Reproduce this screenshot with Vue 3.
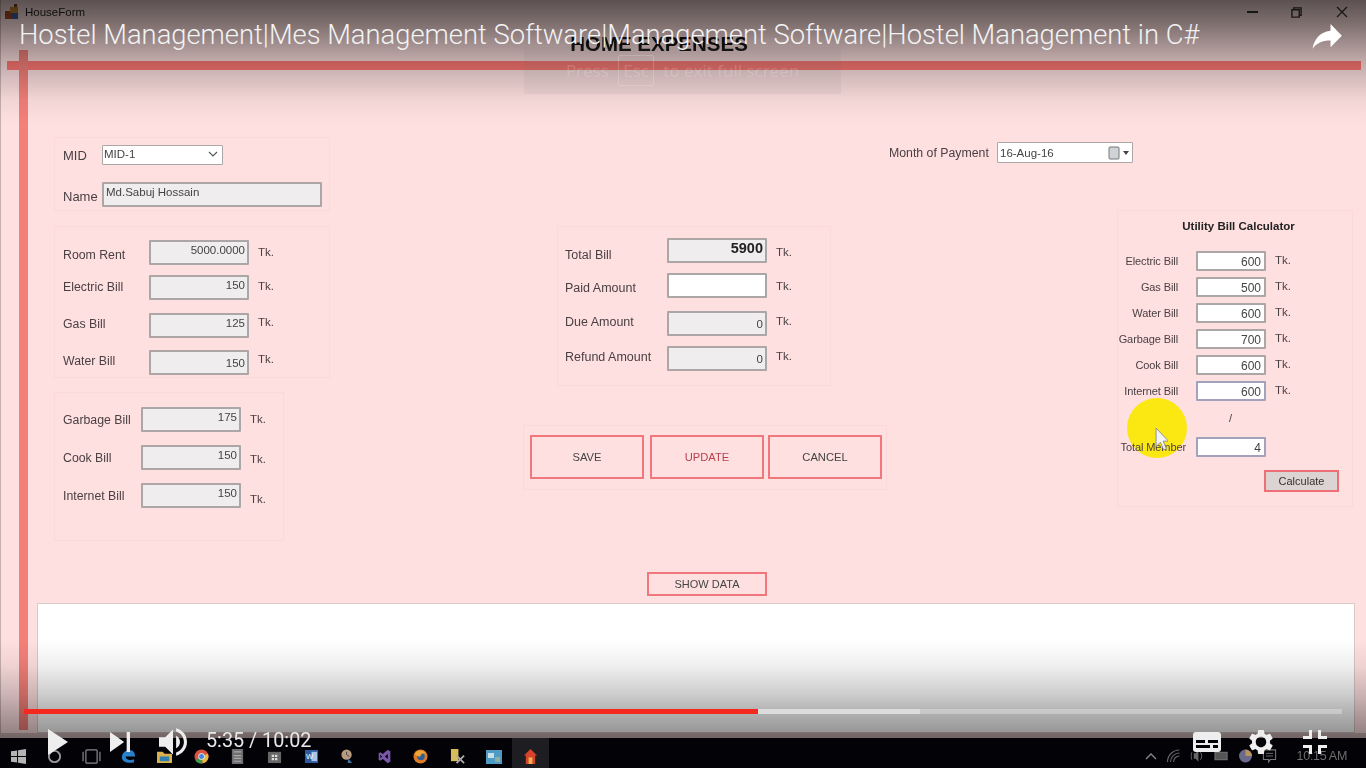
<template>
  <div class="screen">
    <div class="window">
      <header class="titlebar">
        <svg class="app-icon" viewBox="0 0 14 16">
          <rect x="0" y="7" width="6" height="8" fill="#a8482c" />
          <rect x="5" y="3" width="8" height="6" fill="#c98a2c" />
          <rect x="6" y="9" width="7" height="6" fill="#3c5f9c" />
          <rect x="9" y="0" width="3" height="3" fill="#7c3a30" />
        </svg>
        <span class="app-name">HouseForm</span>
        <div class="win-buttons">
          <span class="win-min"></span>
          <svg class="win-max" viewBox="0 0 12 12"><path d="M1 3h8v8H1zM3 3V1h8v8H9" fill="none" stroke="#333" stroke-width="1.500" /></svg>
          <svg class="win-close" viewBox="0 0 12 12"><path d="M1 1l10 10M11 1L1 11" stroke="#333" stroke-width="1.300" /></svg>
        </div>
      </header>
      <h1 class="heading">HOME EXPENSES</h1>
      <div class="red-bar"></div>

      <div class="body">
        <div class="col-left">
          <section class="panel p-member">
            <div class="row">
              <label class="lbl-short">MID</label>
              <div class="field white combo">
                <span>MID-1</span>
                <svg viewBox="0 0 10 6" class="chev"><path d="M1 1l4 4 4-4" fill="none" stroke="#555" stroke-width="1.100" /></svg>
              </div>
            </div>
            <div class="row">
              <label class="lbl-short lbl-name">Name</label>
              <div class="field name-field">Md.Sabuj Hossain</div>
            </div>
          </section>

          <section class="panel p-rent">
            <div v-for="b in rentBills" :key="b.label" class="row">
              <label class="lbl-bill">{{ b.label }}</label>
              <div class="field num">{{ b.value }}</div>
              <span class="tk">Tk.</span>
            </div>
          </section>

          <section class="panel p-other">
            <div v-for="b in otherBills" :key="b.label" class="row">
              <label class="lbl-other">{{ b.label }}</label>
              <div class="field num">{{ b.value }}</div>
              <span class="tk">Tk.</span>
            </div>
          </section>
        </div>

        <div class="col-center">
          <section class="panel p-total">
            <div v-for="t in totals" :key="t.label" class="row">
              <label class="lbl-total">{{ t.label }}</label>
              <div class="field num" :class="{ white: t.editable, strong: t.strong }">{{ t.value }}</div>
              <span class="tk">Tk.</span>
            </div>
          </section>
          <section class="panel p-actions">
            <button class="big-btn">SAVE</button>
            <button class="big-btn update">UPDATE</button>
            <button class="big-btn cancel">CANCEL</button>
          </section>
          <button class="show-btn">SHOW DATA</button>
        </div>

        <div class="col-right">
          <div class="month">
            <label>Month of Payment</label>
            <div class="field white date">
              <span>16-Aug-16</span>
              <svg viewBox="0 0 22 14" class="cal">
                <rect x="1" y="1" width="10" height="12" rx="1" fill="#cfd3d8" stroke="#777" />
                <path d="M15 5h6l-3 4z" fill="#444" />
              </svg>
            </div>
          </div>
          <section class="panel p-utility">
            <h3>Utility Bill Calculator</h3>
            <div v-for="u in utility" :key="u.label" class="u-row">
              <label>{{ u.label }}</label>
              <div class="field white num u-field">{{ u.value }}</div>
              <span class="tk">Tk.</span>
            </div>
            <div class="slash">/</div>
            <div class="u-row u-member">
              <label>Total Member</label>
              <div class="field white num u-field focus">4</div>
            </div>
            <button class="calc-btn">Calculate</button>
          </section>
        </div>
      </div>

      <div class="grid-view"></div>

      <div class="side-bar"></div>
      <div class="highlight"></div>
      <svg class="cursor" viewBox="0 0 12 22">
        <path d="M1 1v17l4-4 3 7 2.500-1-3-7h5z" fill="#f4f4f4" stroke="#888" stroke-width=".8" />
      </svg>
    </div>

    <footer class="taskbar">
      <div class="task"><svg viewBox="0 0 16 16" class="t-icon"><path d="M0 2.500l6.500-1v6H0zM7.500 1.300L16 0v7.500H7.500zM0 8.500h6.500v6l-6.500-1zM7.500 8.500H16V16l-8.500-1.300z" fill="#b4b4b4" /></svg></div>
      <div class="task"><svg viewBox="0 0 16 16" class="t-icon"><circle cx="8" cy="8" r="6" fill="none" stroke="#999" stroke-width="2" /></svg></div>
      <div class="task"><svg viewBox="0 0 22 16" class="t-wide"><rect x="5" y="1" width="12" height="14" rx="1" fill="none" stroke="#888" stroke-width="1.300" /><path d="M2 3v10M20 3v10" stroke="#888" stroke-width="1.300" /></svg></div>
      <div class="task"><svg viewBox="0 0 16 16" class="t-icon"><path d="M1 9c0-5 4-8 8-8 4 0 6 3 6 7H5c0 3 4 5 9 3v3c-6 2-13 0-13-5z" fill="#2a7fc9" /></svg></div>
      <div class="task"><svg viewBox="0 0 16 16" class="t-icon"><path d="M0 3h6l2 2h8v10H0z" fill="#d8b24a" /><rect x="3" y="8" width="10" height="5" fill="#2f7fb5" /></svg></div>
      <div class="task"><svg viewBox="0 0 16 16" class="t-icon"><circle cx="8" cy="8" r="7.500" fill="#d9513f" /><path d="M8 8L1.500 12a7.500 7.500 0 0 0 8 3.300z" fill="#3d9a4f" /><path d="M8 8l6.800-3a7.500 7.500 0 0 1-5.300 10.300z" fill="#e6bd3a" /><circle cx="8" cy="8" r="3.200" fill="#4a86d8" stroke="#eee" /></svg></div>
      <div class="task"><svg viewBox="0 0 14 16" class="t-icon"><rect x="1" y="0" width="12" height="16" fill="#6e6e6e" /><path d="M3 3h8M3 7h8M3 10h8M3 13h8" stroke="#aaa" stroke-width="1.200" /></svg></div>
      <div class="task"><svg viewBox="0 0 16 16" class="t-icon"><rect x="1" y="3" width="14" height="12" fill="#666" /><path d="M5 6h2.500v2.500H5zM8.500 6H11v2.500H8.500zM5 9.500h2.500V12H5zM8.500 9.500H11V12H8.500z" fill="#ddd" /></svg></div>
      <div class="task"><svg viewBox="0 0 16 16" class="t-icon"><rect x="1" y="1" width="14" height="14" fill="#2c5a9e" /><rect x="8" y="3" width="6" height="10" fill="#a8c4e6" /><text x="2" y="11" font-size="8" fill="#fff" font-family="Liberation Sans, sans-serif">W</text></svg></div>
      <div class="task"><svg viewBox="0 0 16 16" class="t-icon"><circle cx="7" cy="6" r="5.500" fill="#b89a80" /><path d="M7 3v3l3 2" stroke="#444" fill="none" /><path d="M9 10l4 5h-5z" fill="#3a6fa8" /></svg></div>
      <div class="task"><svg viewBox="0 0 16 18" class="t-icon"><path d="M12 1l3 2v12l-3 2-6-5-3 2-2-1V5l2-1 3 2zM12 6L8.500 9 12 12zM3 7v4l2-2z" fill="#7a58a8" /></svg></div>
      <div class="task"><svg viewBox="0 0 16 16" class="t-icon"><circle cx="8" cy="8" r="7.500" fill="#e07b24" /><circle cx="8.500" cy="8" r="4" fill="#2d5f9e" /><path d="M2 5c3-5 9-4 12 0-3-1-6 0-6 3-3 0-5-1-6-3z" fill="#f0a636" /></svg></div>
      <div class="task"><svg viewBox="0 0 16 16" class="t-icon"><rect x="1" y="0" width="8" height="13" fill="#d6bb5c" /><path d="M7 7l8 8M15 7l-8 8" stroke="#aaa" stroke-width="2" /></svg></div>
      <div class="task"><svg viewBox="0 0 16 14" class="t-wide2"><rect width="16" height="14" fill="#4f9ac4" /><rect x="2" y="3" width="6" height="5" fill="#c8dfe8" /><rect x="9" y="7" width="5" height="5" fill="#8fb0a0" /></svg></div>
      <div class="task active"><svg viewBox="0 0 14 16" class="t-icon"><path d="M7 0l7 7h-2v9H2V7H0z" fill="#d6432c" /><rect x="5" y="9" width="4" height="7" fill="#f0b24a" /></svg></div>

      <div class="tray">
        <svg viewBox="0 0 12 8" class="tray-caret"><path d="M1 7l5-5 5 5" fill="none" stroke="#8a8a8a" stroke-width="1.300" /></svg>
        <svg viewBox="0 0 14 14" class="tray-i"><path d="M1 13a12 12 0 0 1 12-12M4 13a9 9 0 0 1 9-9M7 13a6 6 0 0 1 6-6" fill="none" stroke="#666" stroke-width="1.200" /></svg>
        <svg viewBox="0 0 16 14" class="tray-i"><path d="M6 4l3-3v12l-3-3H4V4z" fill="#666" /><path d="M11 3c2 2 2 6 0 8M2 3c-1 2-1 6 0 8" fill="none" stroke="#666" /></svg>
        <svg viewBox="0 0 16 12" class="tray-i"><rect x="1" y="2" width="13" height="8" fill="#555" stroke="#777" /></svg>
        <svg viewBox="0 0 14 14" class="tray-i"><circle cx="7" cy="7" r="6.500" fill="#6a6a8a" /><path d="M7 .5a6.500 6.500 0 0 1 6.500 6.500H7z" fill="#b8945a" /></svg>
        <svg viewBox="0 0 16 16" class="tray-i"><path d="M1 1h14v11H9l-2 3v-3H1z" fill="none" stroke="#777" stroke-width="1.200" /><path d="M4 5h8M4 8h8" stroke="#777" /></svg>
        <span class="clock">10:15 AM</span>
      </div>
    </footer>

    <!-- youtube player chrome over the recording -->
    <div class="shade-top"></div>
    <div class="shade-bottom"></div>
    <div class="esc-toast">Press <span class="esc-key">Esc</span> to exit full screen</div>
    <div class="yt-title">{{ videoTitle }}</div>
    <svg class="yt-share" viewBox="6 9 23 19"><path d="M20.200 14.100V9l8.700 8.900-8.700 8.800v-5.200c-6.300 0-10.700 2-13.800 6.300 1.200-6.300 4.900-12.700 13.800-13.700z" fill="#fff" /></svg>
    <div class="yt-controls">
      <div class="progress">
        <div class="played" :style="{ width: playedPct + '%' }"></div>
        <div class="buffered" :style="{ width: bufferedPct + '%' }"></div>
      </div>
      <div class="yt-row">
        <svg class="yt-play" viewBox="0 0 20 26"><path d="M0 0l20 13L0 26z" fill="#eee" /></svg>
        <svg class="yt-next" viewBox="12 12 12 12"><path d="M12 24l8.500-6L12 12zM22 12v12h2V12z" fill="#eee" /></svg>
        <svg class="yt-vol" viewBox="8 9 18 18"><path fill="#eee" d="M8 21h4l5 5V10l-5 5H8zM19 14v8c1.480-.68 2.500-2.230 2.500-4 0-1.740-1.020-3.260-2.500-4zM19 11.290c2.890.85 5 3.540 5 6.710s-2.110 5.860-5 6.710v2.060c4.010-.91 7-4.490 7-8.770s-2.990-7.860-7-8.770z" /></svg>
        <span class="yt-time">5:35 / 10:02</span>
        <div class="yt-right">
          <svg class="yt-cc" viewBox="0 0 28 20"><path fill-rule="evenodd" fill="#eee" d="M3 0h22a3 3 0 0 1 3 3v14a3 3 0 0 1-3 3H3a3 3 0 0 1-3-3V3a3 3 0 0 1 3-3zM3 8v3h9V8zM15 8v3h10V8zM3 13v3h14v-3zM20 13v3h5v-3z" /></svg>
          <svg class="yt-gear" viewBox="10 10 16 16"><path fill-rule="evenodd" fill="#eee" d="m23.940 18.780c.03-.25.05-.51.05-.78s-.02-.52-.05-.78l1.680-1.320c.15-.12.19-.33.09-.51l-1.600-2.760c-.09-.17-.31-.24-.48-.17l-1.990.8c-.41-.32-.86-.58-1.350-.78l-.30-2.120c-.02-.19-.19-.33-.39-.33h-3.200c-.2 0-.36.14-.39.33l-.30 2.120c-.48.2-.93.47-1.350.78l-1.990-.8c-.18-.07-.39 0-.48.17l-1.600 2.760c-.10.17-.05.39.09.51l1.680 1.320c-.03.25-.05.52-.05.78s.02.52.05.78l-1.680 1.320c-.15.12-.19.33-.09.51l1.600 2.760c.09.17.31.24.48.17l1.990-.8c.41.32.86.58 1.350.78l.30 2.120c.02.19.19.33.39.33h3.200c.2 0 .36-.14.39-.33l.30-2.120c.48-.2.93-.47 1.350-.78l1.990.8c.18.07.39 0 .48-.17l1.600-2.760c.09-.17.05-.39-.09-.51zM18 21.500c-1.930 0-3.500-1.570-3.500-3.500s1.570-3.500 3.500-3.500 3.500 1.570 3.500 3.500-1.570 3.500-3.500 3.500z" /></svg>
          <svg class="yt-exit" viewBox="10 10 16 16"><path fill="#eee" d="M14 14h-4v2h6v-6h-2zM22 14v-4h-2v6h6v-2zM20 26h2v-4h4v-2h-6zM10 22h4v4h2v-6h-6z" /></svg>
        </div>
      </div>
    </div>
  </div>
</template>

<script setup>
const videoTitle =
  'Hostel Management|Mes Management Software|Management Software|Hostel Management in C#';

const rentBills = [
  { label: 'Room Rent', value: '5000.0000' },
  { label: 'Electric Bill', value: '150' },
  { label: 'Gas Bill', value: '125' },
  { label: 'Water Bill', value: '150' },
];

const otherBills = [
  { label: 'Garbage Bill', value: '175' },
  { label: 'Cook Bill', value: '150' },
  { label: 'Internet Bill', value: '150' },
];

const totals = [
  { label: 'Total Bill', value: '5900', strong: true },
  { label: 'Paid Amount', value: '', editable: true },
  { label: 'Due Amount', value: '0' },
  { label: 'Refund Amount', value: '0' },
];

const utility = [
  { label: 'Electric Bill', value: '600' },
  { label: 'Gas Bill', value: '500' },
  { label: 'Water Bill', value: '600' },
  { label: 'Garbage Bill', value: '700' },
  { label: 'Cook Bill', value: '600' },
  { label: 'Internet Bill', value: '600' },
];

// 5:35 of 10:02, measured along the bar
const playedPct = 55.7;
const bufferedPct = 68;
</script>

<style>
html,
body {
  margin: 0;
  background: #000;
}
</style>

<style scoped>
.screen {
  position: relative;
  width: 1366px;
  height: 768px;
  overflow: hidden;
  background: #020207;
  font-family: 'Liberation Sans', Arial, sans-serif;
}

/* recorded windows form */
.window {
  position: relative;
  height: 738px;
  box-sizing: border-box;
  background: #ffe0e0;
  border-left: 1px solid #c8b0b0;
  border-bottom: 5px solid #cdb4b6;
  filter: blur(0.6px);
  display: flex;
  flex-direction: column;
  color: #4a4044;
  font-size: 12px;
}
.titlebar {
  height: 24px;
  flex: none;
  display: flex;
  align-items: center;
  padding-left: 4px;
}
.app-icon {
  width: 14px;
  height: 16px;
}
.app-name {
  margin-left: 6px;
  font-size: 11.500px;
  color: #222;
}
.win-buttons {
  margin-left: auto;
  display: flex;
  align-items: center;
  margin-right: 18px;
}
.win-min {
  width: 11px;
  height: 1.500px;
  background: #333;
}
.win-max {
  width: 11px;
  height: 11px;
  margin-left: 33px;
}
.win-close {
  width: 12px;
  height: 12px;
  margin-left: 34px;
}
.heading {
  margin: 0;
  height: 37px;
  flex: none;
  box-sizing: border-box;
  padding-top: 10px;
  text-align: center;
  font-size: 20.500px;
  line-height: 20px;
  font-weight: bold;
  color: #111;
  width: 1316px;
}
.red-bar {
  height: 9px;
  flex: none;
  margin: 0 5px 0 6px;
  background: #ff7873;
}
.side-bar {
  position: absolute;
  left: 18px;
  top: 50px;
  width: 9px;
  height: 680px;
  background: #f5807a;
}

.body {
  position: relative;
  z-index: 1;
  flex: none;
  height: 459px;
  margin-top: 67px;
  display: flex;
  align-items: flex-start;
}
.panel {
  box-sizing: border-box;
  border: 1px solid #fbd9d9;
}
.row {
  display: flex;
  align-items: center;
}
.field {
  box-sizing: border-box;
  height: 25px;
  flex: none;
  background: #efeded;
  border: 2px solid #aca6a6;
  border-radius: 1px;
  font-size: 11.500px;
  line-height: 14px;
  padding: 1px 2px;
  color: #444;
}
.field.white {
  background: #fff;
}
.num {
  width: 100px;
  text-align: right;
}
.strong {
  font-size: 14.500px;
  font-weight: bold;
  color: #222;
}
.tk {
  margin-left: 9px;
  margin-top: -2px;
  font-size: 11.500px;
}

.col-left {
  flex: none;
  width: 276px;
  margin-left: 53px;
}
.p-member {
  height: 74px;
  padding: 7px 0 0 8px;
}
.p-member .row + .row {
  margin-top: 17px;
}
.lbl-short {
  width: 39px;
  font-size: 13px;
}
.lbl-name {
  margin-top: 4px;
}
.combo {
  width: 121px;
  height: 20px;
  display: flex;
  justify-content: space-between;
  align-items: center;
  padding: 0 2px 2px 1px;
  border-width: 1.500px;
}
.chev {
  width: 10px;
  height: 6px;
  margin-right: 2px;
}
.name-field {
  width: 220px;
  padding-left: 2px;
}
.p-rent {
  margin-top: 15px;
  height: 152px;
  padding: 13px 0 0 8px;
}
.p-rent .row:nth-child(2) {
  margin-top: 10px;
}
.p-rent .row:nth-child(3) {
  margin-top: 13px;
}
.p-rent .row:nth-child(4) {
  margin-top: 12px;
}
.lbl-bill {
  width: 86px;
  font-size: 12.300px;
}
.p-rent .row:nth-child(1) .lbl-bill {
  margin-top: 4px;
}
.p-rent .row:nth-child(2) .lbl-bill {
  margin-top: -2px;
}
.p-rent .row:nth-child(3) .lbl-bill,
.p-rent .row:nth-child(4) .lbl-bill {
  margin-top: -4px;
}
.p-rent .row:nth-child(2) .tk {
  margin-top: -4px;
}
.p-rent .row:nth-child(3) .tk,
.p-rent .row:nth-child(4) .tk {
  margin-top: -8px;
}
.p-rent .row:nth-child(4) .field {
  padding-top: 4px;
}
.p-other {
  margin-top: 14px;
  width: 230px;
  height: 149px;
  padding: 14px 0 0 8px;
}
.p-other .row + .row {
  margin-top: 13px;
}
.p-other .row:nth-child(2) .tk {
  margin-top: 2px;
}
.p-other .row:nth-child(3) .tk {
  margin-top: 6px;
}
.lbl-other {
  width: 78px;
  font-size: 12.300px;
}

.col-center {
  flex: none;
  width: 364px;
  margin-left: 193px;
  padding-top: 89px;
}
.p-total {
  width: 274px;
  height: 160px;
  margin-left: 34px;
  padding: 11px 0 0 7px;
}
.p-total .row:nth-child(2) {
  margin-top: 10px;
}
.p-total .row:nth-child(3) {
  margin-top: 13px;
}
.p-total .row:nth-child(4) {
  margin-top: 10px;
}
.lbl-total {
  width: 102px;
  font-size: 12.500px;
}
.p-total .row:nth-child(1) .lbl-total {
  margin-top: 8px;
}
.p-total .row:nth-child(2) .lbl-total {
  margin-top: 4px;
}
.p-total .row:nth-child(3) .lbl-total,
.p-total .row:nth-child(4) .lbl-total {
  margin-top: -4px;
}
.p-total .row:nth-child(1) .tk {
  margin-top: 2px;
}
.p-total .row:nth-child(2) .tk {
  margin-top: 0;
}
.p-total .row:nth-child(3) .tk,
.p-total .row:nth-child(4) .tk {
  margin-top: -6px;
}
.p-total .row:nth-child(3) .field,
.p-total .row:nth-child(4) .field {
  padding-top: 4px;
}
.p-actions {
  margin-top: 39px;
  height: 65px;
  padding: 9px 0 0 6px;
  display: flex;
}
.big-btn {
  width: 114px;
  height: 44px;
  box-sizing: border-box;
  background: transparent;
  border: 2px solid #f0787c;
  font-family: inherit;
  font-size: 11.200px;
  color: #444;
  padding: 0;
}
.update {
  margin-left: 6px;
  color: #b8404c;
}
.cancel {
  margin-left: 4px;
}
.show-btn {
  display: block;
  margin: 82px 0 0 124px;
  width: 120px;
  height: 24px;
  box-sizing: border-box;
  background: transparent;
  border: 2px solid #f0787c;
  font-family: inherit;
  font-size: 11px;
  color: #444;
  padding: 0;
}

.col-right {
  flex: none;
  width: 464px;
  margin-left: 2px;
  padding-top: 5px;
}
.month {
  display: flex;
  align-items: center;
  font-size: 12.300px;
}
.month label {
  width: 108px;
}
.date {
  width: 136px;
  height: 21px;
  display: flex;
  justify-content: space-between;
  align-items: center;
  border-width: 1.500px;
  padding: 0 2px;
  font-size: 11.500px;
}
.cal {
  width: 22px;
  height: 14px;
}
.p-utility {
  margin: 47px 0 0 auto;
  width: 236px;
  height: 297px;
  padding-top: 7px;
}
.p-utility h3 {
  margin: 0 0 17px;
  height: 16px;
  text-align: center;
  font-size: 11.500px;
  line-height: 16px;
  font-weight: bold;
  color: #222;
  padding-left: 7px;
}
.u-row {
  display: flex;
  align-items: center;
  height: 20px;
  margin-bottom: 6px;
}
.u-row label {
  width: 60px;
  text-align: right;
  margin-right: 18px;
  font-size: 11px;
  white-space: nowrap;
  letter-spacing: -0.1px;
}
.u-field {
  width: 70px;
  height: 20px;
  font-size: 12px;
  padding: 2px 3px;
}
.u-row:nth-of-type(n + 6) .u-field {
  border-color: #a2a2bc;
}
.slash {
  height: 30px;
  line-height: 22px;
  padding-left: 111px;
  font-size: 11px;
}
.u-member label {
  width: 68px;
  margin-right: 10px;
}
.focus {
  border-color: #8f90c4;
}
.calc-btn {
  display: block;
  width: 75px;
  height: 22px;
  margin: 13px 13px 0 auto;
  box-sizing: border-box;
  background: #dcd3d3;
  border: 2px solid #ee7076;
  font-family: inherit;
  font-size: 11px;
  color: #333;
  padding: 0;
}
.grid-view {
  flex: 1;
  margin: 7px 11px 0 36px;
  background: #fff;
  border: 1px solid #d8c8c8;
}
.highlight {
  position: absolute;
  z-index: 0;
  left: 1126px;
  top: 398px;
  width: 60px;
  height: 60px;
  border-radius: 50%;
  background: #fbe712;
}
.cursor {
  position: absolute;
  z-index: 2;
  left: 1154px;
  top: 427px;
  width: 13px;
  height: 24px;
}

/* windows taskbar */
.taskbar {
  height: 30px;
  display: flex;
  align-items: center;
  filter: blur(0.5px);
}
.task {
  width: 36.600px;
  height: 30px;
  flex: none;
  display: flex;
  align-items: center;
  justify-content: center;
  padding-top: 7px;
  box-sizing: border-box;
}
.active {
  background: #1e1e22;
}
.t-icon {
  width: 15px;
  height: 15px;
}
.t-wide {
  width: 21px;
  height: 15px;
}
.t-wide2 {
  width: 16px;
  height: 14px;
}
.tray {
  margin-left: auto;
  display: flex;
  align-items: center;
  padding: 6px 19px 0 0;
}
.tray-caret {
  width: 12px;
  height: 8px;
}
.tray-i {
  width: 15px;
  height: 14px;
  margin-left: 9px;
}
.clock {
  margin-left: 20px;
  font-size: 12.500px;
  color: #6e6e6e;
  letter-spacing: -0.3px;
}

/* youtube chrome */
.shade-top {
  position: absolute;
  left: 0;
  right: 0;
  top: 0;
  height: 125px;
  background: linear-gradient(
    rgba(0, 0, 0, 0.64) 0,
    rgba(0, 0, 0, 0.5) 24px,
    rgba(0, 0, 0, 0.25) 60px,
    rgba(0, 0, 0, 0.05) 100px,
    rgba(0, 0, 0, 0) 125px
  );
}
.shade-bottom {
  position: absolute;
  left: 0;
  right: 0;
  top: 640px;
  height: 98px;
  background: linear-gradient(
    rgba(0, 0, 0, 0) 0,
    rgba(0, 0, 0, 0.06) 25px,
    rgba(0, 0, 0, 0.2) 55px,
    rgba(0, 0, 0, 0.3) 72px,
    rgba(0, 0, 0, 0.44) 98px
  );
}
.esc-toast {
  position: absolute;
  left: 524px;
  top: 47px;
  width: 317px;
  height: 47px;
  box-sizing: border-box;
  background: rgba(110, 110, 110, 0.08);
  color: rgba(255, 255, 255, 0.18);
  font-family: 'Open Sans', sans-serif;
  font-size: 17px;
  display: flex;
  align-items: center;
  justify-content: center;
  gap: 5px;
  white-space: pre;
}
.esc-key {
  border: 1px solid rgba(255, 255, 255, 0.18);
  border-radius: 2px;
  padding: 3px 4px;
}
.yt-title {
  position: absolute;
  left: 19px;
  top: 18px;
  font-family: Roboto, sans-serif;
  font-weight: 300;
  font-size: 27.350px;
  line-height: 34px;
  color: #f2f2f2;
  white-space: nowrap;
}
.yt-share {
  position: absolute;
  left: 1312px;
  top: 24px;
  width: 30px;
  height: 25px;
}
.yt-controls {
  position: absolute;
  left: 24px;
  right: 24px;
  top: 709px;
}
.progress {
  position: relative;
  height: 5px;
  background: rgba(255, 255, 255, 0.28);
}
.played {
  position: absolute;
  left: 0;
  top: 0;
  bottom: 0;
  background: #f5281f;
  z-index: 1;
}
.buffered {
  position: absolute;
  left: 0;
  top: 0;
  bottom: 0;
  background: #dcdcdc;
}
.yt-row {
  display: flex;
  align-items: center;
  height: 44px;
  margin-top: 6px;
  padding-left: 24px;
}
.yt-play {
  width: 20px;
  height: 26px;
}
.yt-next {
  width: 20px;
  height: 20px;
  margin-left: 42px;
}
.yt-vol {
  width: 28px;
  height: 28px;
  margin-left: 29px;
}
.yt-time {
  margin-left: 19px;
  margin-bottom: 4px;
  font-family: Roboto, sans-serif;
  font-size: 19.800px;
  color: #e8e8e8;
  white-space: nowrap;
}
.yt-right {
  margin-left: auto;
  display: flex;
  align-items: center;
}
.yt-cc {
  width: 28px;
  height: 20px;
}
.yt-gear {
  width: 24px;
  height: 24px;
  margin-left: 28px;
}
.yt-exit {
  width: 24px;
  height: 24px;
  margin-left: 30px;
  margin-right: 15px;
}
</style>
